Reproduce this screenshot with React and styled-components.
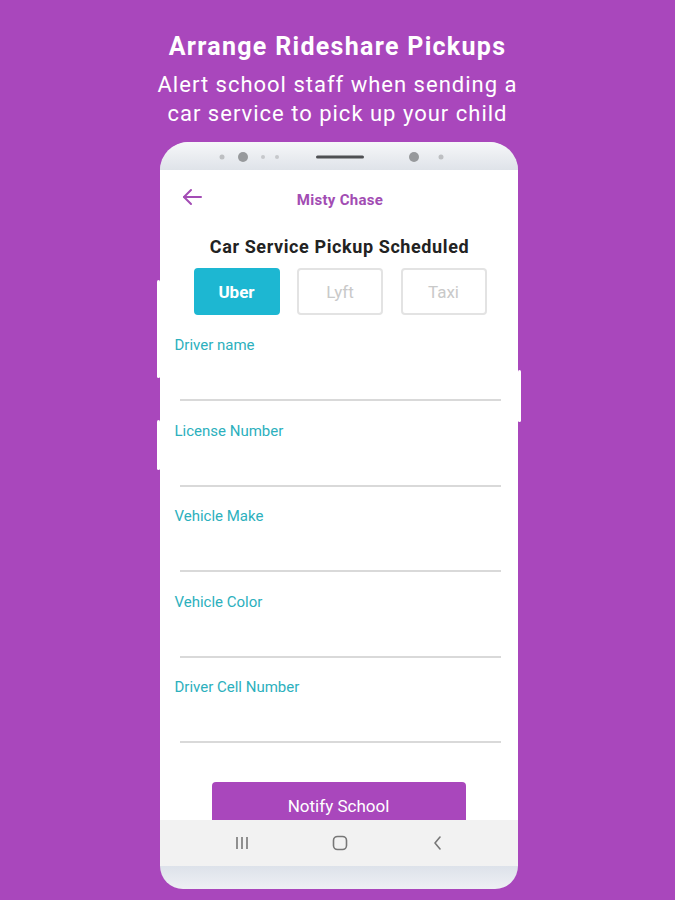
import React from "react";
import styled, { createGlobalStyle } from "styled-components";

const GlobalStyle = createGlobalStyle`
  html, body {
    margin: 0;
    padding: 0;
    background: #a947bc;
  }
  body {
    font-family: Roboto, "Noto Sans", Arial, sans-serif;
  }
`;

const Page = styled.div`
  width: 675px;
  height: 900px;
  overflow: hidden;
  display: flex;
  flex-direction: column;
  align-items: center;
  padding-top: 32px;
  box-sizing: border-box;
  background: #a947bc;
`;

const Title = styled.h1`
  margin: 0;
  font-size: 25px;
  line-height: 30px;
  font-weight: 700;
  letter-spacing: 1.3px;
  color: #fff;
  text-align: center;
`;

const Subtitle = styled.p`
  margin: 8px 0 0;
  font-size: 22px;
  line-height: 29px;
  font-weight: 400;
  color: #fff;
  text-align: center;
  letter-spacing: 1px;
`;

const Phone = styled.div`
  position: relative;
  margin: 14px 0 0 2px;
  width: 358px;
  height: 747px;
  border-radius: 30px;
  background: #fff;
  display: flex;
  flex-direction: column;
  flex-shrink: 0;
`;

const SideKey = styled.div`
  position: absolute;
  top: ${(p) => p.top}px;
  height: ${(p) => p.h}px;
  width: 3px;
  background: #fff;
  ${(p) => (p.right ? "right: -3px;" : "left: -3px;")}
  border-radius: 2px;
`;

const TopBezel = styled.div`
  flex-shrink: 0;
  height: 28px;
  border-radius: 30px 30px 0 0;
  background: linear-gradient(#f6f7f9, #dfe3e9);
  display: flex;
  align-items: center;
  justify-content: center;
`;

const Screen = styled.div`
  flex-shrink: 0;
  height: 650px;
  overflow: hidden;
  background: #fff;
  display: flex;
  flex-direction: column;
  & > * {
    flex-shrink: 0;
  }
`;

const Header = styled.div`
  position: relative;
  height: 58px;
  display: flex;
  align-items: center;
  justify-content: center;
`;

const BackButton = styled.div`
  position: absolute;
  left: 21px;
  top: 16px;
  width: 22px;
  height: 22px;
  display: flex;
`;

const HeaderName = styled.div`
  font-size: 15px;
  font-weight: 700;
  letter-spacing: 0.3px;
  color: #a24cb3;
  padding-top: 2px;
  padding-left: 3px;
`;

const Heading = styled.div`
  margin-top: 7px;
  font-size: 18px;
  line-height: 24px;
  font-weight: 700;
  letter-spacing: 0.6px;
  color: #222;
  text-align: center;
  padding-left: 2px;
`;

const ServiceRow = styled.div`
  margin-top: 9px;
  display: flex;
  justify-content: center;
  gap: 17.5px;
  padding-left: 3px;
`;

const ServiceButton = styled.div`
  width: 86px;
  height: 47px;
  box-sizing: border-box;
  border-radius: 4px;
  display: flex;
  align-items: center;
  justify-content: center;
  font-size: 17px;
  font-weight: ${(p) => (p.active ? 700 : 400)};
  color: ${(p) => (p.active ? "#fff" : "#c9c9c9")};
  background: ${(p) => (p.active ? "#1db7d2" : "#fff")};
  border: 2px solid ${(p) => (p.active ? "#1db7d2" : "#e3e3e3")};
`;

const Form = styled.div`
  margin-top: 21px;
  display: flex;
  flex-direction: column;
`;

const Field = styled.div`
  display: flex;
  flex-direction: column;
  margin-bottom: 20.5px;
`;

const Label = styled.div`
  padding-left: 15px;
  font-size: 15px;
  line-height: 18px;
  color: #2cb0bd;
`;

const InputLine = styled.div`
  margin: 0 17px 0 20px;
  height: 45px;
  border-bottom: 2px solid #d9d9d9;
`;

const NotifyButton = styled.div`
  margin: 18px auto 0;
  width: 254px;
  height: 48px;
  border-radius: 4px;
  background: #a947bc;
  color: #fff;
  font-size: 17px;
  display: flex;
  align-items: flex-start;
  justify-content: center;
  padding-top: 14px;
  box-sizing: border-box;
`;

const NavBar = styled.div`
  flex-shrink: 0;
  height: 46px;
  background: #f2f2f2;
  display: grid;
  grid-template-columns: repeat(3, 98px);
  justify-content: center;
  align-items: center;
  justify-items: center;
  padding-left: 3px;
`;

const BottomBezel = styled.div`
  flex-shrink: 0;
  height: 23px;
  border-radius: 0 0 30px 30px;
  background: linear-gradient(#dde2ea, #eef0f4);
`;

const Sensors = () => (
  <svg width="358" height="28" viewBox="0 0 358 28">
    <circle cx="62" cy="15" r="2.5" fill="#bdbfc2" />
    <circle cx="83" cy="15" r="5" fill="#97999c" />
    <circle cx="103" cy="15" r="2" fill="#c6c8cb" />
    <circle cx="117" cy="15" r="2" fill="#c6c8cb" />
    <rect x="156" y="13.5" width="48" height="3" rx="1.5" fill="#4e5053" />
    <circle cx="254" cy="15" r="5" fill="#97999c" />
    <circle cx="281" cy="15" r="2.5" fill="#bdbfc2" />
  </svg>
);

const BackArrow = () => (
  <svg width="22" height="22" viewBox="0 0 22 22" fill="none" stroke="#a34db5" strokeWidth="2" strokeLinecap="round" strokeLinejoin="round">
    <path d="M20 11H3" />
    <path d="M10 4l-7 7 7 7" />
  </svg>
);

const RecentsIcon = () => (
  <svg width="16" height="14" viewBox="0 0 16 14" stroke="#777" strokeWidth="1.6">
    <path d="M3 1v12M8 1v12M13 1v12" />
  </svg>
);

const HomeIcon = () => (
  <svg width="16" height="16" viewBox="0 0 16 16" fill="none" stroke="#777" strokeWidth="1.6">
    <rect x="1.5" y="1.5" width="13" height="13" rx="4" />
  </svg>
);

const BackNavIcon = () => (
  <svg width="12" height="14" viewBox="0 0 12 14" fill="none" stroke="#777" strokeWidth="1.6" strokeLinecap="round" strokeLinejoin="round">
    <path d="M8 1L3 7l5 6" />
  </svg>
);

const fields = [
  "Driver name",
  "License Number",
  "Vehicle Make",
  "Vehicle Color",
  "Driver Cell Number",
];

export default function App() {
  return (
    <>
      <GlobalStyle />
      <Page>
        <Title>Arrange Rideshare Pickups</Title>
        <Subtitle>
          Alert school staff when sending a
          <br />
          car service to pick up your child
        </Subtitle>
        <Phone>
          <SideKey top={138} h={98} />
          <SideKey top={278} h={50} />
          <SideKey right top={228} h={52} />
          <TopBezel>
            <Sensors />
          </TopBezel>
          <Screen>
            <Header>
              <BackButton>
                <BackArrow />
              </BackButton>
              <HeaderName>Misty Chase</HeaderName>
            </Header>
            <Heading>Car Service Pickup Scheduled</Heading>
            <ServiceRow>
              <ServiceButton active>Uber</ServiceButton>
              <ServiceButton>Lyft</ServiceButton>
              <ServiceButton>Taxi</ServiceButton>
            </ServiceRow>
            <Form>
              {fields.map((f) => (
                <Field key={f}>
                  <Label>{f}</Label>
                  <InputLine />
                </Field>
              ))}
            </Form>
            <NotifyButton>Notify School</NotifyButton>
          </Screen>
          <NavBar>
            <RecentsIcon />
            <HomeIcon />
            <BackNavIcon />
          </NavBar>
          <BottomBezel />
        </Phone>
      </Page>
    </>
  );
}
